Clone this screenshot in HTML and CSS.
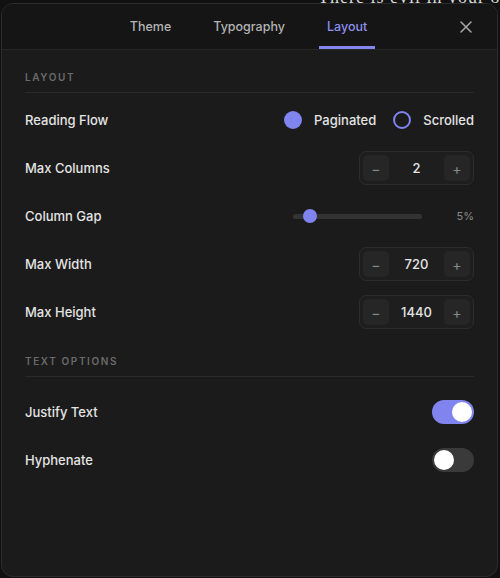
FILE: index.html
```html
<!DOCTYPE html>
<html>
<head>
<meta charset="utf-8">
<link rel="stylesheet" href="styles.css">
</head>
<body>
<div class="page-text">There is evil in your own</div>
<div class="panel">
  <div class="header">
    <div></div>
    <nav class="tabs">
      <div class="tab">Theme</div>
      <div class="tab">Typography</div>
      <div class="tab active">Layout</div>
    </nav>
    <div class="close">
      <svg width="12" height="12" viewBox="0 0 12 12"><path d="M1 1L11 11M11 1L1 11" stroke="#a8a8a8" stroke-width="1.5" stroke-linecap="round"/></svg>
    </div>
  </div>
  <div class="body">
    <div class="section-title">Layout</div>
    <div class="rows first">
      <div class="row">
        <span class="label">Reading Flow</span>
        <div class="radios">
          <span class="radio on"></span><span class="radio-text">Paginated</span>
          <span class="radio off"></span><span class="radio-text">Scrolled</span>
        </div>
      </div>
      <div class="row">
        <span class="label">Max Columns</span>
        <div class="stepper"><span class="step-btn">−</span><span class="step-val">2</span><span class="step-btn">+</span></div>
      </div>
      <div class="row">
        <span class="label">Column Gap</span>
        <div class="slider-wrap">
          <div class="track"><span class="thumb"></span></div>
          <span class="slider-val">5%</span>
        </div>
      </div>
      <div class="row">
        <span class="label">Max Width</span>
        <div class="stepper"><span class="step-btn">−</span><span class="step-val">720</span><span class="step-btn">+</span></div>
      </div>
      <div class="row">
        <span class="label">Max Height</span>
        <div class="stepper"><span class="step-btn">−</span><span class="step-val">1440</span><span class="step-btn">+</span></div>
      </div>
    </div>
    <div class="section-title second">Text Options</div>
    <div class="rows toggles">
      <div class="row">
        <span class="label">Justify Text</span>
        <span class="toggle on"><span class="knob"></span></span>
      </div>
      <div class="row">
        <span class="label">Hyphenate</span>
        <span class="toggle off"><span class="knob"></span></span>
      </div>
    </div>
  </div>
</div>
</body>
</html>
```
FILE: styles.css
```css
html, body {
  margin: 0;
  padding: 0;
  width: 500px;
  height: 578px;
  overflow: hidden;
  background: #111111;
  font-family: Inter, "Noto Sans", sans-serif;
}

.page-text {
  position: absolute;
  top: -13px;
  left: 318px;
  font-family: "Liberation Serif", serif;
  font-size: 18px;
  color: #d8d8d8;
  letter-spacing: 1px;
  white-space: nowrap;
}

.panel {
  position: absolute;
  left: 1px;
  top: 3px;
  width: 497px;
  height: 574px;
  box-sizing: border-box;
  background: #1b1b1b;
  border: 1px solid #2c2c2c;
  border-radius: 12px;
  overflow: hidden;
}

.header {
  display: grid;
  grid-template-columns: 1fr auto 1fr;
  align-items: stretch;
  height: 45px;
  background: #151515;
  border-bottom: 1px solid #262626;
}

.tabs {
  display: flex;
  gap: 26px;
  margin-left: -2px;
}

.tab {
  padding: 0 8px;
  display: flex;
  align-items: center;
  font-size: 12.5px;
  font-weight: 500;
  color: #b4b4b4;
  border-bottom: 3px solid transparent;
  padding-top: 3px;
}

.tab.active {
  color: #8d90f2;
  border-bottom-color: #8387ee;
}

.close {
  justify-self: end;
  align-self: center;
  margin-right: 25px;
  width: 12px;
  height: 12px;
  display: flex;
}

.body {
  padding: 20px 23px 0 23px;
}

.section-title {
  font-size: 10px;
  line-height: 14px;
  font-weight: 600;
  letter-spacing: 1.6px;
  text-transform: uppercase;
  color: #6a6a6a;
  padding-bottom: 8px;
  border-bottom: 1px solid #2a2a2a;
}

.section-title.second {
  margin-top: 18px;
}

.rows.first {
  margin-top: 3px;
}

.rows.toggles {
  margin-top: 11px;
}

.row {
  height: 48px;
  display: flex;
  align-items: center;
  justify-content: space-between;
}

.label {
  font-size: 13px;
  font-weight: 500;
  color: #e4e4e4;
}

.radios {
  display: flex;
  align-items: center;
}

.radio {
  width: 18px;
  height: 18px;
  border-radius: 50%;
  box-sizing: border-box;
  margin-right: 12px;
}

.radio.on {
  background: #7f84ee;
}

.radio.off {
  border: 2px solid #7f84ee;
  margin-left: 17px;
}

.radio-text {
  font-size: 13px;
  font-weight: 500;
  color: #e4e4e4;
}

.stepper {
  width: 115px;
  height: 34px;
  box-sizing: border-box;
  border: 1px solid #2c2c2c;
  background: #1e1e1e;
  border-radius: 7px;
  display: flex;
  align-items: center;
  padding: 0 3px;
}

.step-btn {
  width: 26px;
  height: 26px;
  border-radius: 5px;
  background: #262626;
  color: #8a8a8a;
  font-size: 14px;
  display: flex;
  align-items: center;
  justify-content: center;
}

.step-val {
  flex: 1;
  text-align: center;
  font-size: 13px;
  font-weight: 500;
  color: #e4e4e4;
}

.slider-wrap {
  display: flex;
  align-items: center;
}

.track {
  position: relative;
  width: 129px;
  height: 5px;
  border-radius: 3px;
  background: #333333;
}

.thumb {
  position: absolute;
  left: 10px;
  top: -5px;
  width: 14px;
  height: 14px;
  border-radius: 50%;
  background: #7f84ee;
}

.slider-val {
  width: 52px;
  text-align: right;
  font-size: 11px;
  color: #8a8a8a;
}

.toggle {
  width: 42px;
  height: 24px;
  border-radius: 12px;
  box-sizing: border-box;
  padding: 2px;
  display: flex;
}

.toggle.on {
  background: #7f84ee;
  justify-content: flex-end;
}

.toggle.off {
  background: #3a3a3a;
  justify-content: flex-start;
}

.knob {
  width: 20px;
  height: 20px;
  border-radius: 50%;
  background: #ffffff;
}
```
